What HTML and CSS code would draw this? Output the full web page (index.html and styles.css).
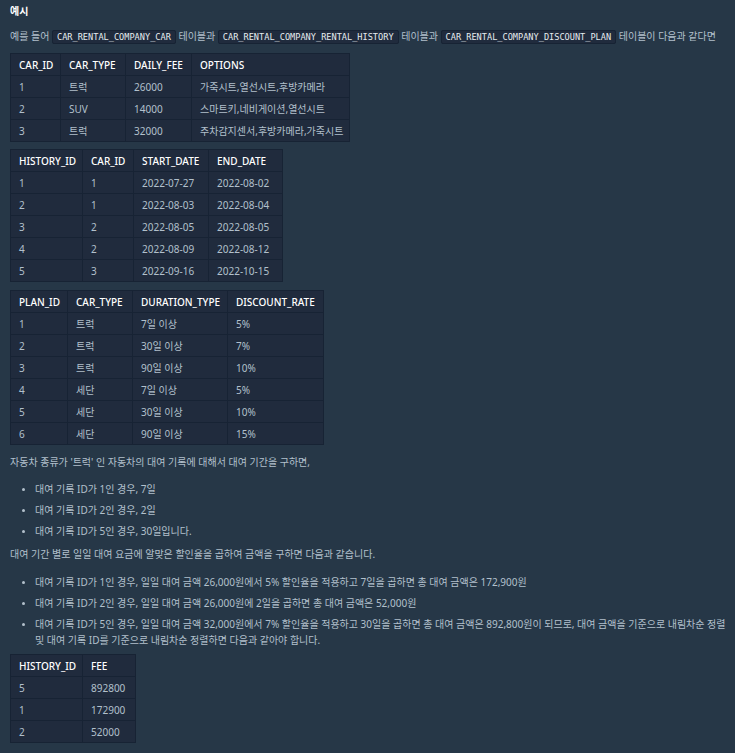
FILE: index.html
```html
<!DOCTYPE html>
<html lang="ko">
<head>
<meta charset="utf-8">
<link rel="stylesheet" href="styles.css">
</head>
<body>
<div class="content">
  <h5 class="title">예시</h5>
  <p class="line">예를 들어 <code>CAR_RENTAL_COMPANY_CAR</code> 테이블과 <code>CAR_RENTAL_COMPANY_RENTAL_HISTORY</code> 테이블과 <code>CAR_RENTAL_COMPANY_DISCOUNT_PLAN</code> 테이블이 다음과 같다면</p>

  <table class="t1">
    <colgroup><col class="c50"><col class="c65"><col class="c66"><col class="c158"></colgroup>
    <thead><tr><th>CAR_ID</th><th>CAR_TYPE</th><th>DAILY_FEE</th><th>OPTIONS</th></tr></thead>
    <tbody>
      <tr><td>1</td><td>트럭</td><td>26000</td><td>가죽시트,열선시트,후방카메라</td></tr>
      <tr><td>2</td><td>SUV</td><td>14000</td><td>스마트키,네비게이션,열선시트</td></tr>
      <tr><td>3</td><td>트럭</td><td>32000</td><td>주차감지센서,후방카메라,가죽시트</td></tr>
    </tbody>
  </table>

  <table class="t2">
    <colgroup><col class="c72"><col class="c51"><col class="c75"><col class="c74"></colgroup>
    <thead><tr><th>HISTORY_ID</th><th>CAR_ID</th><th>START_DATE</th><th>END_DATE</th></tr></thead>
    <tbody>
      <tr><td>1</td><td>1</td><td>2022-07-27</td><td>2022-08-02</td></tr>
      <tr><td>2</td><td>1</td><td>2022-08-03</td><td>2022-08-04</td></tr>
      <tr><td>3</td><td>2</td><td>2022-08-05</td><td>2022-08-05</td></tr>
      <tr><td>4</td><td>2</td><td>2022-08-09</td><td>2022-08-12</td></tr>
      <tr><td>5</td><td>3</td><td>2022-09-16</td><td>2022-10-15</td></tr>
    </tbody>
  </table>

  <table class="t3">
    <colgroup><col class="c57"><col class="c65"><col class="c95"><col class="c96"></colgroup>
    <thead><tr><th>PLAN_ID</th><th>CAR_TYPE</th><th>DURATION_TYPE</th><th>DISCOUNT_RATE</th></tr></thead>
    <tbody>
      <tr><td>1</td><td>트럭</td><td>7일 이상</td><td>5%</td></tr>
      <tr><td>2</td><td>트럭</td><td>30일 이상</td><td>7%</td></tr>
      <tr><td>3</td><td>트럭</td><td>90일 이상</td><td>10%</td></tr>
      <tr><td>4</td><td>세단</td><td>7일 이상</td><td>5%</td></tr>
      <tr><td>5</td><td>세단</td><td>30일 이상</td><td>10%</td></tr>
      <tr><td>6</td><td>세단</td><td>90일 이상</td><td>15%</td></tr>
    </tbody>
  </table>

  <p class="para p1">자동차 종류가 '트럭' 인 자동차의 대여 기록에 대해서 대여 기간을 구하면,</p>
  <ul class="list l1">
    <li>대여 기록 ID가 1인 경우, 7일</li>
    <li>대여 기록 ID가 2인 경우, 2일</li>
    <li>대여 기록 ID가 5인 경우, 30일입니다.</li>
  </ul>

  <p class="para p2">대여 기간 별로 일일 대여 요금에 알맞은 할인율을 곱하여 금액을 구하면 다음과 같습니다.</p>
  <ul class="list l2">
    <li>대여 기록 ID가 1인 경우, 일일 대여 금액 26,000원에서 5% 할인율을 적용하고 7일을 곱하면 총 대여 금액은 172,900원</li>
    <li>대여 기록 ID가 2인 경우, 일일 대여 금액 26,000원에 2일을 곱하면 총 대여 금액은 52,000원</li>
    <li>대여 기록 ID가 5인 경우, 일일 대여 금액 32,000원에서 7% 할인율을 적용하고 30일을 곱하면 총 대여 금액은 892,800원이 되므로, 대여 금액을 기준으로 내림차순 정렬 및 대여 기록 ID를 기준으로 내림차순 정렬하면 다음과 같아야 합니다.</li>
  </ul>

  <table class="t4">
    <colgroup><col class="c72"><col class="c53"></colgroup>
    <thead><tr><th>HISTORY_ID</th><th>FEE</th></tr></thead>
    <tbody>
      <tr><td>5</td><td>892800</td></tr>
      <tr><td>1</td><td>172900</td></tr>
      <tr><td>2</td><td>52000</td></tr>
    </tbody>
  </table>
</div>
</body>
</html>
```

FILE: styles.css
```css
html, body {
  margin: 0;
  padding: 0;
  background: #263747;
}
body {
  font-family: "Noto Sans", "Noto Sans CJK KR", sans-serif;
  font-size: 10px;
  line-height: 16px;
  color: #b2c0cc;
  word-break: keep-all;
}
.content {
  padding: 3px 4px 10px 10px;
}
.title {
  margin: 0;
  font-size: 10px;
  font-weight: bold;
  color: #ffffff;
  line-height: 16px;
}
.line {
  margin: 9px 0 8px 0;
  white-space: nowrap;
}
code {
  font-family: "DejaVu Sans Mono", monospace;
  font-size: 8.6px;
  color: #e6ebef;
  background: #202b3d;
  border: 1px solid #172334;
  border-radius: 2px;
  padding: 1px 4px;
}
table {
  border-collapse: collapse;
  table-layout: fixed;
  background: #202b3d;
  margin: 0 0 7px 0;
}
th, td {
  border: 1px solid #172334;
  height: 21px;
  padding: 0 0 0 8px;
  text-align: left;
  white-space: nowrap;
  overflow: hidden;
}
th {
  color: #ffffff;
  font-weight: 500;
}
td {
  color: #b2c0cc;
}
.t2 { margin-bottom: 8px; }
.t3 { margin-bottom: 9px; }
.c50 { width: 50px; }
.c51 { width: 51px; }
.c53 { width: 53px; }
.c57 { width: 57px; }
.c65 { width: 65px; }
.c66 { width: 66px; }
.c72 { width: 72px; }
.c74 { width: 74px; }
.c75 { width: 75px; }
.c95 { width: 95px; }
.c96 { width: 96px; }
.c158 { width: 158px; }
.para {
  margin: 0;
}
.list {
  margin: 0;
  padding: 0 0 0 25px;
}
.list li {
  margin-bottom: 5px;
}
.list li::marker {
  font-size: 8px;
}
.l1 { margin: 11px 0 7px 0; }
.l2 { margin: 12px 0 6px 0; }
.l2 li:last-child { margin-bottom: 0; }
.l1 li:last-child { margin-bottom: 0; }
```
